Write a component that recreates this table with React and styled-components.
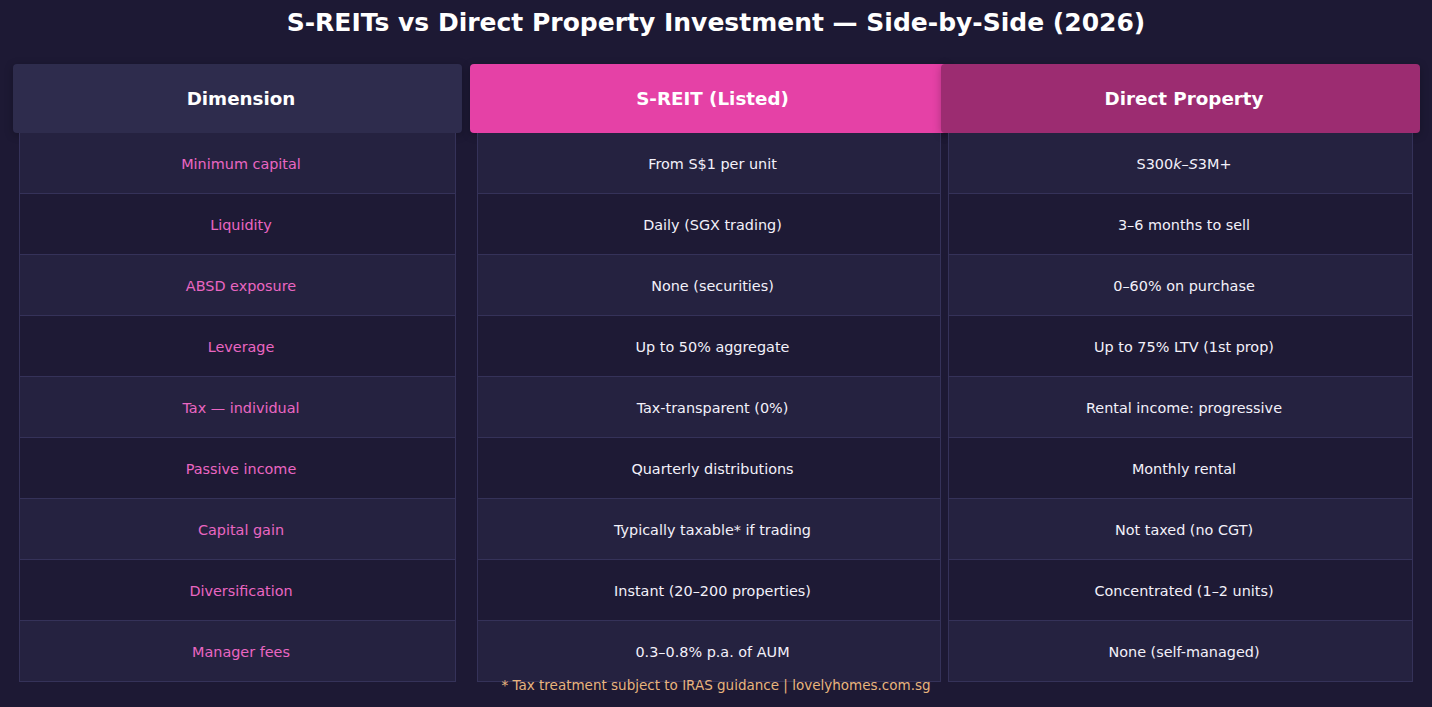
import React from 'react'
import styled, { createGlobalStyle } from 'styled-components'

const GlobalStyle = createGlobalStyle`
    html, body {
        margin: 0;
        padding: 0;
        background: #1d1934;
    }
    * {
        box-sizing: border-box;
    }
`;

const columns = [
    {
        key: 'dim',
        title: 'Dimension',
        width: 437,
        offset: 19,
        spread: 6,
        headBg: '#2e2c4d',
        accent: true,
        rows: [
            'Minimum capital',
            'Liquidity',
            'ABSD exposure',
            'Leverage',
            'Tax — individual',
            'Passive income',
            'Capital gain',
            'Diversification',
            'Manager fees',
        ],
    },
    {
        key: 'reit',
        title: 'S-REIT (Listed)',
        width: 464,
        offset: 21,
        spread: 7,
        headBg: '#e541a6',
        rows: [
            'From S$1 per unit',
            'Daily (SGX trading)',
            'None (securities)',
            'Up to 50% aggregate',
            'Tax-transparent (0%)',
            'Quarterly distributions',
            'Typically taxable* if trading',
            'Instant (20–200 properties)',
            '0.3–0.8% p.a. of AUM',
        ],
    },
    {
        key: 'direct',
        title: 'Direct Property',
        width: 465,
        offset: 7,
        spread: 7,
        headBg: '#9c2c71',
        rows: [
            <>S300<i>k</i>–<i>S</i>3M+</>,
            '3–6 months to sell',
            '0–60% on purchase',
            'Up to 75% LTV (1st prop)',
            'Rental income: progressive',
            'Monthly rental',
            'Not taxed (no CGT)',
            'Concentrated (1–2 units)',
            'None (self-managed)',
        ],
    },
];

function App() {
    return (
        <Page>
            <GlobalStyle />
            <Title>S-REITs vs Direct Property Investment — Side-by-Side (2026)</Title>
            <Table>
                {columns.map((col) => (
                    <Column key={col.key} $width={col.width} $offset={col.offset}>
                        <HeadCell $bg={col.headBg} $spread={col.spread}>
                            {col.title}
                        </HeadCell>
                        {col.rows.map((text, i) => (
                            <Cell key={i} $alt={i % 2 === 1} $accent={col.accent}>
                                {text}
                            </Cell>
                        ))}
                    </Column>
                ))}
            </Table>
            <Footnote>* Tax treatment subject to IRAS guidance | lovelyhomes.com.sg</Footnote>
        </Page>
    )
}

const Page = styled.div`
    width: 1432px;
    height: 707px;
    overflow: hidden;
    background: #1d1934;
    font-family: "DejaVu Sans", "Liberation Sans", sans-serif;
    color: #f3f1fa;
`;

const Title = styled.h1`
    margin: 0;
    height: 46px;
    line-height: 46px;
    font-size: 25px;
    font-weight: 700;
    text-align: center;
    color: #ffffff;
`;

const Table = styled.div`
    display: flex;
    align-items: flex-start;
    margin-top: 18px;
`;

const Column = styled.div`
    width: ${(p) => p.$width}px;
    margin-left: ${(p) => p.$offset}px;
    display: flex;
    flex-direction: column;
    position: relative;
`;

const HeadCell = styled.div`
    height: 69px;
    margin: 0 -${(p) => p.$spread}px;
    padding-left: 7px;
    background: ${(p) => p.$bg};
    border-radius: 4px;
    display: flex;
    align-items: center;
    justify-content: center;
    font-size: 18.3px;
    font-weight: 700;
    color: #ffffff;
    box-shadow: 0 2px 8px rgba(0, 0, 0, 0.25);
`;

const Cell = styled.div`
    height: 61px;
    padding: 2px 0 0 7px;
    display: flex;
    align-items: center;
    justify-content: center;
    background: ${(p) => (p.$alt ? '#1e1a35' : '#252240')};
    border: 1px solid #353259;
    border-top: none;
    font-size: 14.4px;
    color: ${(p) => (p.$accent ? '#ea66c2' : '#f3f1fa')};

    i {
        font-style: italic;
    }
`;

const Footnote = styled.div`
    margin-top: -5px;
    text-align: center;
    font-size: 13.5px;
    line-height: 16px;
    color: #e8b47e;
    position: relative;
`;

export default App;
